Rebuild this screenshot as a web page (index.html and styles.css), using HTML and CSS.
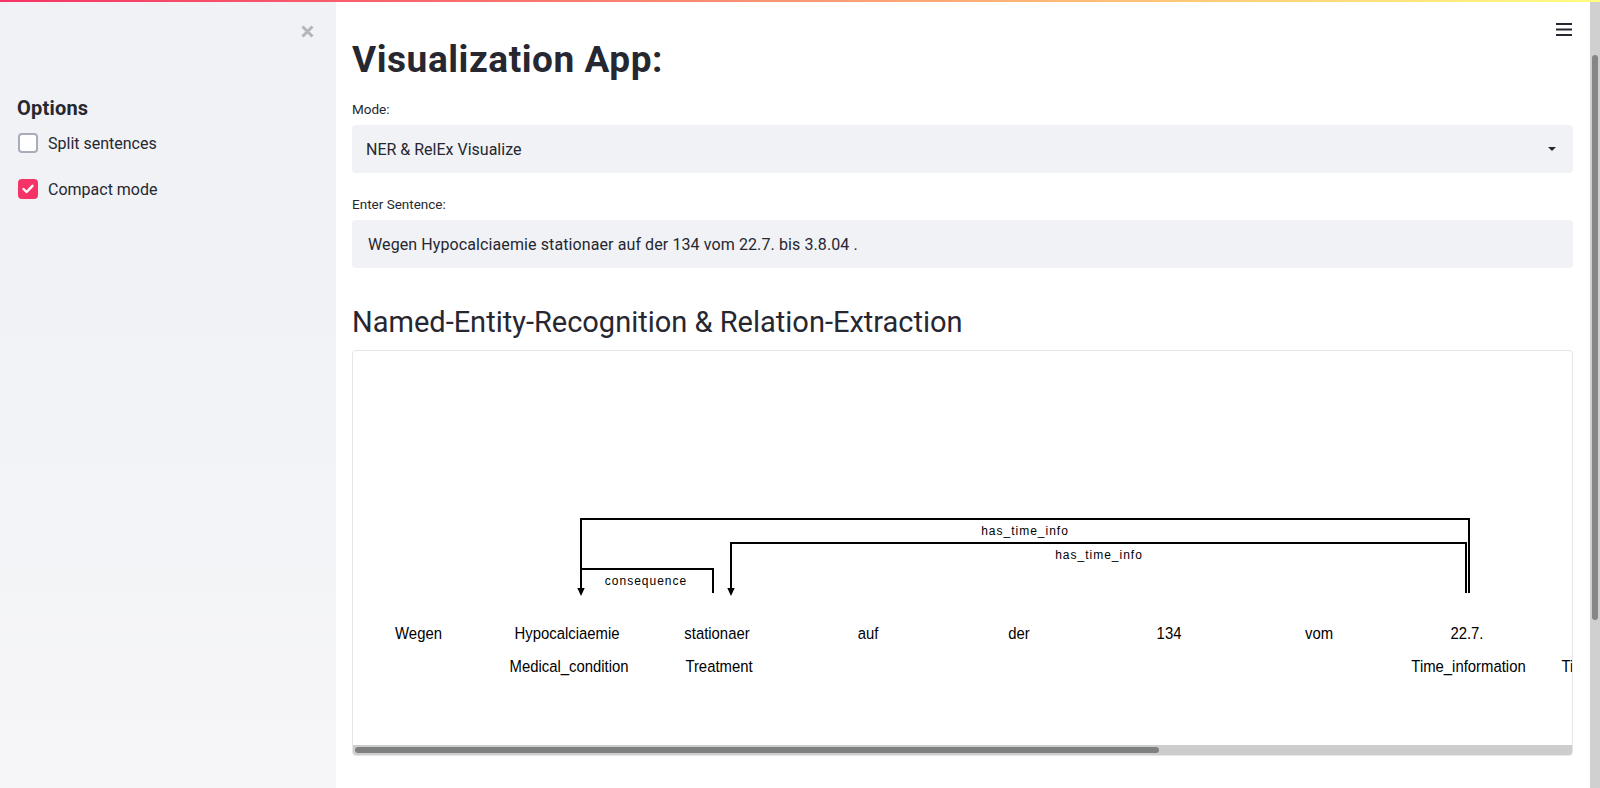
FILE: index.html
```html
<!DOCTYPE html>
<html lang="en">
<head>
<meta charset="utf-8">
<title>Visualization App</title>
<link rel="stylesheet" href="styles.css">
</head>
<body>
<div class="decoration"></div>
<div class="app">
  <aside class="sidebar">
    <div class="sidebar-top">
      <button class="close-btn" aria-label="Close sidebar">
        <svg width="13" height="13" viewBox="0 0 13 13"><path d="M1.5 1.5 L11.5 11.5 M11.5 1.5 L1.5 11.5" stroke="#b3b6bd" stroke-width="3" fill="none"/></svg>
      </button>
    </div>
    <h2 class="sb-title">Options</h2>
    <label class="check"><span class="box"></span><span class="check-text">Split sentences</span></label>
    <label class="check checked"><span class="box"><svg width="12" height="10" viewBox="0 0 12 10"><path d="M1.5 5 L4.6 8 L10.5 1.8" stroke="#fff" stroke-width="2.4" fill="none" stroke-linecap="round" stroke-linejoin="round"/></svg></span><span class="check-text">Compact mode</span></label>
  </aside>

  <main class="main">
    <div class="toolbar">
      <svg width="16" height="14" viewBox="0 0 16 14"><path d="M0 2 H16 M0 7.5 H16 M0 13 H16" stroke="#262730" stroke-width="2" fill="none"/></svg>
    </div>
    <h1 class="title">Visualization App:</h1>
    <div class="field-label">Mode:</div>
    <div class="select"><span>NER &amp; RelEx Visualize</span><span class="caret"></span></div>
    <div class="field-label second">Enter Sentence:</div>
    <div class="input">Wegen Hypocalciaemie stationaer auf der 134 vom 22.7. bis 3.8.04 .</div>
    <h2 class="subheader">Named-Entity-Recognition &amp; Relation-Extraction</h2>
    <div class="viz">
      <div class="viz-canvas">
        <svg class="viz-svg" width="1839" height="394" viewBox="0 0 1839 394">
          <g stroke="#000" stroke-width="2" fill="none">
            <path d="M228 242 V168 H1116 V242"/>
            <path d="M378 242 V192 H1113 V242"/>
            <path d="M228 242 V218 H360 V242"/>
          </g>
          <g fill="#000">
            <path d="M224.3 237 L231.7 237 L228 245 Z"/>
            <path d="M374.3 237 L381.7 237 L378 245 Z"/>
          </g>
          <g font-family="'Liberation Sans', Arial, sans-serif" font-size="12" letter-spacing="1" text-anchor="middle" fill="#000">
            <text x="293" y="234">consequence</text>
            <text x="672" y="184">has_time_info</text>
            <text x="746" y="208">has_time_info</text>
          </g>
          <g transform="scale(0.875 1)" font-family="'Liberation Sans', Arial, sans-serif" font-size="17" text-anchor="middle" fill="#000">
            <text x="74.9" y="288">Wegen</text>
            <text x="244.6" y="288">Hypocalciaemie</text>
            <text x="416" y="288">stationaer</text>
            <text x="588.6" y="288">auf</text>
            <text x="761.1" y="288">der</text>
            <text x="932.6" y="288">134</text>
            <text x="1104" y="288">vom</text>
            <text x="1273.1" y="288">22.7.</text>
            <text x="1445.7" y="288">bis</text>
            <text x="1617.1" y="288">3.8.04</text>
            <text x="1788.6" y="288">.</text>
            <text x="246.9" y="321">Medical_condition</text>
            <text x="418.3" y="321">Treatment</text>
            <text x="1274.9" y="321">Time_information</text>
            <text x="1446.4" y="321">Time_information</text>
          </g>
        </svg>
      </div>
      <div class="hscroll"><div class="hthumb"></div></div>
    </div>
  </main>

  <div class="vscroll"><div class="vthumb"></div></div>
</div>
</body>
</html>
```

FILE: styles.css
```css
* { box-sizing: border-box; }

html, body {
  margin: 0;
  padding: 0;
  width: 1600px;
  height: 788px;
  overflow: hidden;
  background: #ffffff;
}

body {
  font-family: Roboto, "Noto Sans", sans-serif;
  color: #262730;
}

.decoration {
  position: absolute;
  top: 0;
  left: 0;
  right: 0;
  height: 2px;
  background: linear-gradient(90deg, #f63366, #fffd80);
  z-index: 10;
}

.app {
  display: flex;
  height: 788px;
}

/* Sidebar */
.sidebar {
  width: 336px;
  flex: none;
  background: linear-gradient(180deg, #f0f2f6 0%, #f0f2f6 35%, #f6f6f8 100%);
  padding: 0 0 0 17px;
}

.sidebar-top {
  display: flex;
  justify-content: flex-end;
  padding: 25px 22px 0 0;
  height: 38px;
}

.close-btn {
  width: 13px;
  height: 13px;
  padding: 0;
  border: 0;
  background: none;
  display: block;
}

.close-btn svg { display: block; }

.sb-title {
  margin: 58px 0 13px;
  font-size: 20px;
  line-height: 24px;
  font-weight: 700;
  letter-spacing: 0.2px;
}

.check {
  display: flex;
  align-items: center;
  gap: 10px;
  height: 20px;
  margin-left: 1px;
  font-size: 16px;
}

.check + .check { margin-top: 26px; }

.box {
  width: 20px;
  height: 20px;
  flex: none;
  border-radius: 4px;
  border: 2px solid #a9adbb;
  background: #ffffff;
  display: flex;
  align-items: center;
  justify-content: center;
}

.checked .box {
  background: #f63366;
  border-color: #f63366;
}

.box svg { display: block; }

/* Main */
.main {
  flex: 1;
  min-width: 0;
  position: relative;
  padding: 38px 17px 0 16px;
}

.toolbar {
  position: absolute;
  top: 22px;
  right: 18px;
}

.toolbar svg { display: block; }

.title {
  margin: 0;
  font-size: 37px;
  line-height: 44px;
  font-weight: 700;
  letter-spacing: 0.55px;
}

.field-label {
  margin-top: 17px;
  font-size: 13.5px;
  line-height: 20px;
}

.field-label.second { margin-top: 21px; }

.select,
.input {
  margin-top: 6px;
  height: 48px;
  background: #f0f2f6;
  border-radius: 4px;
  display: flex;
  align-items: center;
  font-size: 16px;
}

.select {
  justify-content: space-between;
  padding: 0 17px 0 14px;
}

.caret {
  width: 0;
  height: 0;
  border-left: 4px solid transparent;
  border-right: 4px solid transparent;
  border-top: 4px solid #262730;
}

.input {
  padding: 0 16px;
  letter-spacing: 0.1px;
}

.subheader {
  margin: 36px 0 0;
  font-size: 29px;
  line-height: 36px;
  font-weight: 400;
}

.viz {
  margin-top: 10px;
  height: 406px;
  border: 1px solid #e6e6e6;
  border-radius: 4px;
  overflow: hidden;
  background: #ffffff;
  display: flex;
  flex-direction: column;
}

.viz-canvas {
  height: 394px;
  overflow: hidden;
}

.viz-svg { display: block; }

.hscroll {
  height: 10px;
  flex: none;
  background: #cdcdcd;
  padding: 2px 0 2px 2px;
}

.hthumb {
  width: 804px;
  height: 6px;
  background: #7f8080;
  border-radius: 3px;
}

/* Page scrollbar */
.vscroll {
  width: 10px;
  flex: none;
  background: #d0d0d0;
  padding: 55px 2px 0 2px;
}

.vthumb {
  height: 565px;
  background: #868686;
  border-radius: 3px;
}
```
